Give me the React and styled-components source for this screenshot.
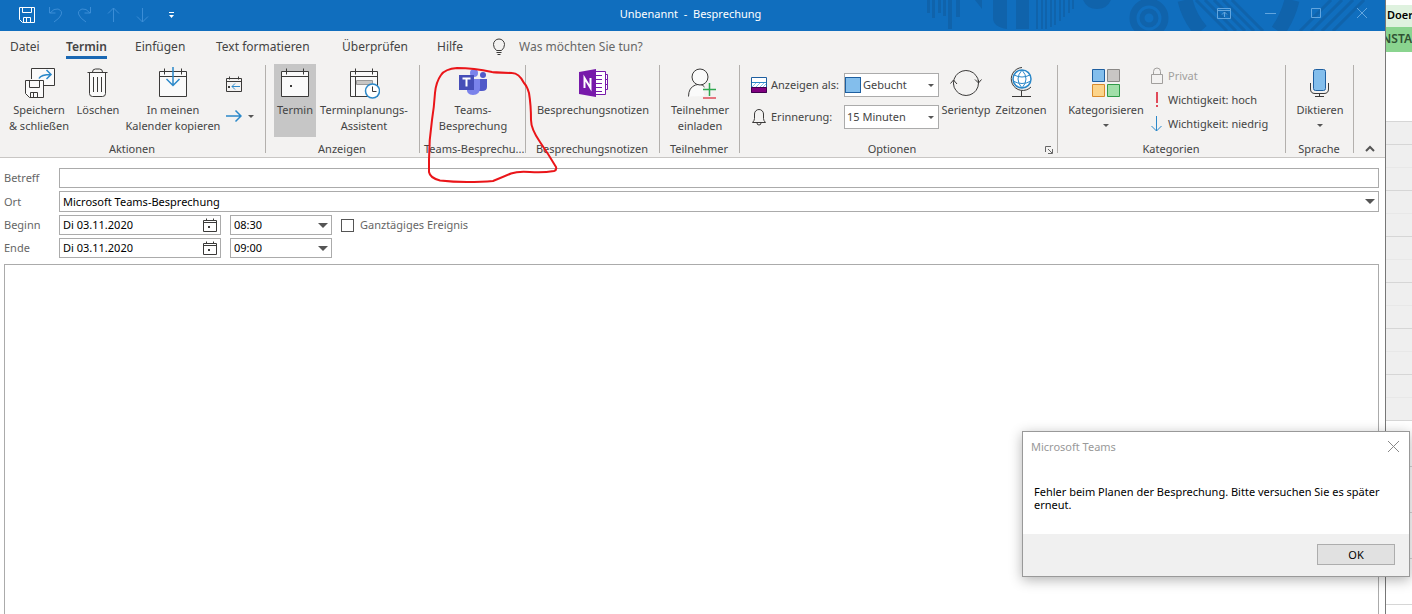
import React from "react";
import styled, { createGlobalStyle, css } from "styled-components";

const ink = "#444444";
const dark = "#3b3a39";
const blue = "#2b88c9";

const GlobalStyle = createGlobalStyle`
  *, *::before, *::after { box-sizing: border-box; }
  body {
    margin: 0;
    background: #fff;
    color: ${ink};
    font: 11px/16px "Noto Sans", "Segoe UI", sans-serif;
  }
  button, input, select, textarea { font: inherit; color: inherit; margin: 0; }
`;

const Desktop = styled.div`
  position: relative;
  display: grid;
  grid-template-columns: minmax(0, 1fr) 26px;
  height: 100vh;
  overflow: hidden;
`;

const MeetingWindow = styled.main`
  display: flex;
  flex-direction: column;
  min-width: 0;
  border-right: 1px solid #777;
  background: #fff;
`;

/* Title bar */
const TitleBar = styled.header`
  position: relative;
  display: grid;
  grid-template-columns: 1fr auto 1fr;
  align-items: center;
  height: 31px;
  flex: none;
  background: #106ebe;
  color: #fff;
`;

const Doodles = styled.svg`
  position: absolute;
  top: 0;
  right: 0;
  width: 465px;
  height: 31px;
`;

const QuickAccess = styled.div`
  display: flex;
  align-items: center;
  gap: 12px;
  padding: 0 18px 2px;
`;

const WindowControls = styled.div`
  position: relative;
  display: flex;
  justify-content: flex-end;
  align-items: center;
  gap: 30px;
  padding: 0 15px 5px 0;
`;

const PlainButton = styled.button`
  display: flex;
  align-items: center;
  padding: 0;
  border: 0;
  background: none;
`;

const TitleButton = styled(PlainButton)`
  color: ${(p) => (p.$dim ? "#3b8dd6" : "#fff")};
`;

const ControlButton = styled(PlainButton)`
  color: #62a5de;
`;

const WindowTitle = styled.h1`
  margin: 0;
  padding: 0 4px 4px 0;
  font-size: 11px;
  font-weight: 400;
  white-space: pre;
`;

/* Ribbon */
const Tabs = styled.nav`
  display: grid;
  grid-template-columns: 56px 69px 81px 126px 95px 62px 1fr;
  align-items: start;
  justify-items: start;
  flex: none;
  height: 31px;
  padding: 6px 10px 0;
  background: #f3f2f1;
  font-size: 12px;
  line-height: 19px;
`;

const Tab = styled.a`
  color: ${ink};
  text-decoration: none;
  white-space: nowrap;
  border-bottom: 3px solid transparent;
  ${(p) =>
    p.$active &&
    css`
      font-weight: 600;
      border-color: #1a68b3;
    `}
`;

const TellMe = styled.label`
  display: flex;
  align-items: center;
  gap: 12px;
  margin-left: -8px;
  padding-left: 0;
`;

const TellMeInput = styled.input`
  width: 160px;
  padding: 0;
  border: 0;
  background: none;
  outline: 0;
  &::placeholder { color: #666; opacity: 1; }
`;

const Ribbon = styled.div`
  display: grid;
  grid-template-columns: 266px 154px 106px 134px 80px 318px 228px 68px 1fr;
  flex: none;
  border-bottom: 1px solid #c8c6c4;
  background: #f3f2f1;
`;

const Group = styled.section`
  position: relative;
  display: flex;
  flex-direction: column;
  min-width: 0;
  padding-top: 2px;
  background: linear-gradient(#b3b0ad, #b3b0ad) right 3px / 1px 88px no-repeat;
`;

const GroupBody = styled.div`
  display: flex;
  justify-content: ${(p) => (p.$start ? "flex-start" : "center")};
  height: 73px;
  padding-left: ${(p) => p.$pad || 0}px;
`;

const GroupFooter = styled.div`
  display: flex;
  align-items: center;
  height: 20px;
  padding: 4px 4px 0;
`;

const GroupTitle = styled.h2`
  flex: 1;
  min-width: 0;
  margin: 0;
  padding-right: 2px;
  font-size: 11px;
  font-weight: 400;
  text-align: center;
  white-space: nowrap;
`;

const BigButton = styled.button`
  display: flex;
  flex-direction: column;
  align-items: center;
  flex: none;
  width: ${(p) => p.$width}px;
  padding: 3px 0 0;
  border: 0;
  background: ${(p) => (p.$pressed ? "#c6c6c6" : "none")};
  line-height: 16px;
  white-space: pre;
  & > svg { flex: none; margin-bottom: 3px; }
`;

const CaretLine = styled.span`
  display: flex;
  align-items: center;
  height: 14px;
`;

const SmallStack = styled.div`
  display: flex;
  flex-direction: column;
  gap: 16px;
  padding: 12px 0 0 1px;
`;

const SmallButton = styled(PlainButton)`
  gap: 6px;
  height: 16px;
`;

const OptionFields = styled.div`
  display: grid;
  grid-template-columns: 16px 69px 95px;
  grid-template-rows: 24px 24px;
  column-gap: 4px;
  row-gap: 8px;
  align-content: start;
  align-items: center;
  padding-top: 9px;
  margin-right: 2px;
`;

const FieldLabel = styled.label`
  white-space: nowrap;
`;

const Picker = styled.div`
  display: flex;
  align-items: center;
  gap: 2px;
  height: 24px;
  padding: 0 4px 0 ${(p) => (p.$swatch ? 0 : 2)}px;
  border: 1px solid #ababab;
  background: #fff;
`;

const Swatch = styled.span`
  width: 16px;
  height: 16px;
  border: 1px solid #1e5fa0;
  background: #83beec;
`;

const BareSelect = styled.select`
  appearance: none;
  flex: 1;
  min-width: 0;
  padding: 0;
  border: 0;
  background: none;
  outline: 0;
`;

const ItemList = styled.div`
  display: flex;
  flex-direction: column;
`;

const ListButton = styled(PlainButton)`
  gap: 4px;
  height: 24px;
  white-space: nowrap;
  color: ${(p) => (p.disabled ? "#a19f9d" : ink)};
`;

const Collapse = styled.div`
  display: flex;
  align-items: flex-end;
  padding: 0 0 4px 11px;
`;

const RedMark = styled.svg`
  position: absolute;
  top: 0;
  left: 0;
  z-index: 2;
  width: 144px;
  height: 128px;
  pointer-events: none;
`;

/* Form */
const Form = styled.form`
  display: flex;
  flex-direction: column;
  flex: 1;
  min-height: 0;
  padding: 10px 6px 0 4px;
  color: #000;
`;

const Row = styled.div`
  display: flex;
  align-items: center;
  margin-bottom: 3px;
`;

const RowLabel = styled.label`
  flex: none;
  width: 55px;
  color: #666;
`;

const Box = styled.div`
  display: flex;
  align-items: center;
  flex: ${(p) => (p.$width ? "none" : "1")};
  width: ${(p) => (p.$width ? p.$width + "px" : "auto")};
  height: ${(p) => (p.$tall ? 21 : 20)}px;
  margin-right: ${(p) => (p.$width ? 9 : 0)}px;
  padding: 0 3px;
  border: 1px solid #ababab;
  background: #fff;
`;

const BareInput = styled.input`
  flex: 1;
  min-width: 0;
  height: 16px;
  padding: 0;
  border: 0;
  background: none;
  outline: 0;
`;

const Check = styled.input`
  appearance: none;
  width: 13px;
  height: 13px;
  border: 1px solid #555;
  background: #fff;
`;

const CheckLabel = styled.label`
  display: flex;
  align-items: center;
  gap: 6px;
  color: #666;
`;

const Message = styled.textarea`
  flex: 1;
  margin-top: 3px;
  padding: 8px;
  border: 1px solid #ababab;
  border-bottom: 0;
  outline: 0;
  resize: none;
`;

/* Calendar strip of the window behind */
const Strip = styled.aside`
  display: flex;
  flex-direction: column;
  overflow: hidden;
  padding-top: 5px;
  background: #fff;
`;

const StripCell = styled.div`
  display: flex;
  flex: none;
  justify-content: ${(p) => (p.$end ? "flex-end" : "flex-start")};
  height: ${(p) => p.$height}px;
  padding-left: 1px;
  overflow: hidden;
  background: ${(p) => p.$fill};
  color: ${(p) => p.$color};
  font-size: ${(p) => p.$size}px;
  font-weight: 600;
  line-height: ${(p) => p.$height - 2}px;
`;

const Slots = styled.div`
  flex: none;
  margin-top: 69px;
  border-top: 1px solid #d6d6d6;
`;

const Slot = styled.div`
  height: ${(p) => (p.$half ? 23 : 46)}px;
  border-bottom: 1px solid #d6d6d6;
  background: ${(p) =>
    p.$free ? "#fff" : p.$half ? "#efefef" : "linear-gradient(#e8e8e8, #e8e8e8) 0 22px / 100% 1px no-repeat #efefef"};
`;

/* Error dialog */
const Dialog = styled.div`
  position: absolute;
  right: 2px;
  bottom: 37px;
  z-index: 3;
  width: 388px;
  border: 1px solid #999;
  background: #fff;
  color: #000;
  box-shadow: 0 3px 12px rgba(0, 0, 0, 0.3);
`;

const DialogHead = styled.div`
  display: flex;
  justify-content: space-between;
  align-items: center;
  height: 30px;
  padding: 0 10px 1px 8px;
  color: #999;
`;

const DialogText = styled.p`
  height: 72px;
  margin: 0;
  padding: 23px 11px 0;
  line-height: 13px;
`;

const DialogFooter = styled.div`
  display: flex;
  justify-content: flex-end;
  height: 42px;
  padding: 10px 14px 0;
  background: #f0f0f0;
`;

const OkButton = styled.button`
  width: 78px;
  height: 21px;
  padding: 0;
  border: 1px solid #adadad;
  background: #e1e1e1;
`;

const Icon = ({ w = 16, h = w, children, sw = 1, color = dark }) => (
  <svg width={w} height={h} viewBox={`0 0 ${w} ${h}`} fill="none" stroke={color} strokeWidth={sw} aria-hidden="true">
    {children}
  </svg>
);

const Caret = ({ w = 6, color = "#555" }) => (
  <svg width={w} height={Math.ceil(w / 2)} viewBox="0 0 10 5" preserveAspectRatio="none" fill={color} aria-hidden="true">
    <path d="M0 0h10L5 5z" />
  </svg>
);

const DateIcon = () => (
  <Icon w={14}>
    <path d="M.5 2.5h13v11H.5zM.5 4.500h13M3.5 .5v2M10.5 .5v2" />
    <path d="M5 8h2v2H5z" fill={dark} stroke="none" />
  </Icon>
);

const TitleDoodles = () => (
  <Doodles viewBox="0 0 465 31" fill="#1063ab" aria-hidden="true">
    <path d="M7 0h3v13H7zM12 0h3v18h-3zM18 0h3v13h-3zM23 0h3v16h-3zM28 0h4v29h-4zM36 0h4v17h-4zM55 0h7v9zM73 0h14v29q-14-2-14-11zM96 0h13v29H96z" />
    <path d="M116 0h2v29h-2zM121 0h2v29h-2zM125 0h2v29h-2zM130 0h2v27h-2zM134 0h2v25h-2zM139 0h2v21h-2zM143 0h2v17h-2zM148 0h2v13h-2zM152 0h2v9h-2z" />
    <path d="M163 0h28q-4 9-14 9t-14-9z" />
    <g fill="none" stroke="#1063ab">
      <circle cx="229" cy="18" r="16" strokeWidth="7" />
      <circle cx="229" cy="18" r="7" strokeWidth="5" />
      <path d="M265 0q4 17 16 31M372 0q-4 17-14 31" strokeWidth="15" />
      <path d="M276 0l31 31M285 0l31 31M294 0l31 31M303 0l31 31M312 0l31 31M380 31l31-31M391 31l31-31M402 31l31-31M413 31l31-31" strokeWidth="3" />
    </g>
  </Doodles>
);

const CalendarBase = () => (
  <>
    <path d="M2.5 4.5h27v25h-27z" fill="#fafafa" />
    <path d="M2.5 9.5h27M7.5 1.5v6M24.5 1.5v6" />
  </>
);

const BigAction = ({ icon, text, width, pressed, caret }) => (
  <BigButton type="button" $width={width} $pressed={pressed}>
    {icon}
    <span>{text}</span>
    {caret && (
      <CaretLine>
        <Caret />
      </CaretLine>
    )}
  </BigButton>
);

const RibbonGroup = ({ title, start, pad, launcher, overlay, children }) => (
  <Group>
    <GroupBody $start={start} $pad={pad}>
      {children}
    </GroupBody>
    <GroupFooter>
      <GroupTitle>{title}</GroupTitle>
      {launcher}
    </GroupFooter>
    {overlay}
  </Group>
);

const icons = {
  saveClose: (
    <Icon w={32}>
      <path d="M8.500 12V1.500h23v17H21" fill="#fafafa" />
      <path d="M2.500 13.500h18v17h-14l-4-4z" fill="#fafafa" />
      <path d="M6.500 13.500v7h10v-7M7.500 30.500v-5h7v5M10.500 26v4" />
      <path d="M16 11.500q2-4 12-4M23.500 3l4.500 4.500-4.500 4.500" stroke={blue} strokeWidth="1.500" />
    </Icon>
  ),
  trash: (
    <Icon w={32}>
      <path d="M7.500 5.500v21q0 3 3 3h10q3 0 3-3v-21" fill="#fafafa" />
      <path d="M5.500 5.500h20M10.500 5q0-3 3-3h4q3 0 3 3M11.500 10v15M15.500 10v15M19.500 10v15" />
    </Icon>
  ),
  copyCal: (
    <Icon w={32}>
      <CalendarBase />
      <path d="M16 0v18M9.500 12l6.500 6.500 6.500-6.500" stroke={blue} strokeWidth="1.500" />
    </Icon>
  ),
  termin: (
    <Icon w={32}>
      <CalendarBase />
      <path d="M11 18h2v2h-2z" fill={dark} stroke="none" />
    </Icon>
  ),
  planner: (
    <Icon w={32}>
      <CalendarBase />
      <path d="M8.500 13.500h16v4h-16z" fill="#c8c6c4" stroke="#999" />
      <path d="M7.500 10v19" />
      <circle cx="24.500" cy="24" r="7" fill="#fff" stroke={blue} strokeWidth="1.500" />
      <path d="M24.500 19.500v5h4" />
    </Icon>
  ),
  teams: (
    <Icon w={32}>
      <g stroke="none">
        <circle cx="26" cy="8" r="3" fill="#5059c9" />
        <path d="M20 12h10v8q0 4-5 4h-5z" fill="#5059c9" />
        <circle cx="17" cy="6" r="4" fill="#7b83eb" />
        <path d="M10 12h13v9q0 7-7 7t-6-7z" fill="#7b83eb" />
        <path d="M2 8h15v15H2z" fill="#464eb8" />
      </g>
      <path d="M5.500 11.500h8M9.500 11.500v8" stroke="#fff" strokeWidth="2" />
    </Icon>
  ),
  onenote: (
    <Icon w={32}>
      <path d="M18 4.500h10.500v23H18M28.500 7.500h2v5h-2M28.500 12.500h2v5h-2M28.500 17.500h2v5h-2" stroke="#7719aa" fill="#fff" />
      <path d="M18 8.500h7M18 12.500h7M18 16.500h7M18 20.500h7M18 24.500h7" stroke="#7719aa" />
      <path d="M2 5l17-3v28L2 27z" fill="#7719aa" stroke="none" />
      <path d="M7.500 21V11l6 10V11" stroke="#fff" strokeWidth="2" />
    </Icon>
  ),
  invite: (
    <Icon w={32}>
      <path d="M4.500 29.500q0-9 7-11.500h7l2 11" fill="#fafafa" stroke="none" />
      <path d="M4.500 29.500q0-9 7-11.500 6-2 9 2" />
      <circle cx="16" cy="10" r="8" fill="#fafafa" />
      <path d="M25.500 16v13M19 22.500h13" stroke="#2ea84f" strokeWidth="1.500" />
      <path d="M19 31h13" stroke="#e04a59" strokeWidth="1.500" />
    </Icon>
  ),
  recur: (
    <Icon w={32}>
      <path d="M3.500 17.500V16A12.500 12.500 0 0 1 26 8.500M28.500 13v3A12.500 12.500 0 0 1 6 23.500" />
      <path d="M26 8.500q2.500 3 2.500 7M6 23.500q-2.500-3-2.500-7" />
      <path d="M.5 16.500l3-3.500 3.500 4M25 12.500l3.500 3.500 3-3.500" />
    </Icon>
  ),
  globe: (
    <Icon w={32}>
      <g stroke={blue}>
        <circle cx="17" cy="12" r="9" fill="#fff" strokeWidth="1.500" />
        <path d="M17 3q-8 9 0 18M17 3q8 9 0 18M9 8q8 4 16 0M8 14q9 5 18 0" />
      </g>
      <path d="M17 .5A11.500 11.500 0 1 0 26 20M16.500 24v5M7 29.500h19" />
    </Icon>
  ),
  categories: (
    <Icon w={32}>
      <path d="M2.500 2.500h12v12h-12z" fill="#83beec" stroke="#1e5fa0" />
      <path d="M17.500 2.500h12v12h-12z" fill="#c8c6c4" stroke="#8a8886" />
      <path d="M2.500 17.500h12v12h-12z" fill="#fcd48a" stroke="#d98a2b" />
      <path d="M17.500 17.500h12v12h-12z" fill="#a1dfa9" stroke="#2f9a48" />
    </Icon>
  ),
  mic: (
    <Icon w={32}>
      <rect x="9.500" y="2.500" width="12" height="21" rx="2" fill="#83beec" stroke="#1e5fa0" />
      <path d="M6.500 16v6q0 4.500 4.500 4.500h9q4.500 0 4.500-4.500v-6M15.500 26.500v3M11 29.500h9" />
    </Icon>
  ),
};

export default function App() {
  return (
    <Desktop>
      <GlobalStyle />
      <MeetingWindow>
        <TitleBar>
          <TitleDoodles />
          <QuickAccess>
            <TitleButton aria-label="Speichern">
              <Icon w={17} color="#fff">
                <path d="M1.500 1.500h15v15h-12l-3-3zM4.500 1.500v5h9v-5M5.500 16.500v-5h7v5M8.500 12v4" />
              </Icon>
            </TitleButton>
            <TitleButton $dim aria-label="Rückgängig">
              <Icon w={17} color="currentColor">
                <path d="M2.500 1v6h6M3 7q4-5 8-4 5 2 3 6-1 3-7 7" />
              </Icon>
            </TitleButton>
            <TitleButton $dim aria-label="Wiederholen">
              <Icon w={17} color="currentColor">
                <path d="M14.500 1v6h-6M14 7Q10 2 6 3 1 5 3 9q1 3 7 7" />
              </Icon>
            </TitleButton>
            <TitleButton $dim aria-label="Vorheriges Element">
              <Icon w={17} color="currentColor">
                <path d="M8.500 16V2M3 7.500L8.500 2 14 7.500" />
              </Icon>
            </TitleButton>
            <TitleButton $dim aria-label="Nächstes Element">
              <Icon w={17} color="currentColor">
                <path d="M8.500 2v14M3 10.500L8.500 16l5.500-5.500" />
              </Icon>
            </TitleButton>
            <TitleButton aria-label="Symbolleiste anpassen">
              <Icon w={17} color="#fff">
                <path d="M6 6.500h5" />
                <path d="M6 9h5l-2.500 3z" fill="#fff" stroke="none" />
              </Icon>
            </TitleButton>
          </QuickAccess>
          <WindowTitle>{"Unbenannt  -  Besprechung"}</WindowTitle>
          <WindowControls>
            <ControlButton aria-label="Menüband-Anzeigeoptionen">
              <Icon w={16} color="currentColor">
                <path d="M1.500 3.500h13v10h-13zM1.500 5.500h13M8.500 12V7M6 9.500L8.500 7 11 9.500" />
              </Icon>
            </ControlButton>
            <ControlButton aria-label="Minimieren">
              <Icon w={16} color="currentColor">
                <path d="M3 8.500h11" />
              </Icon>
            </ControlButton>
            <ControlButton aria-label="Maximieren">
              <Icon w={16} color="currentColor">
                <path d="M3.500 3.500h9v9h-9z" />
              </Icon>
            </ControlButton>
            <ControlButton aria-label="Schließen">
              <Icon w={16} color="currentColor">
                <path d="M3 3l10 10M13 3L3 13" />
              </Icon>
            </ControlButton>
          </WindowControls>
        </TitleBar>

        <Tabs>
          <Tab href="#datei">Datei</Tab>
          <Tab href="#termin" $active>Termin</Tab>
          <Tab href="#einfuegen">Einfügen</Tab>
          <Tab href="#text">Text formatieren</Tab>
          <Tab href="#pruefen">Überprüfen</Tab>
          <Tab href="#hilfe">Hilfe</Tab>
          <TellMe>
            <Icon w={16} h={18}>
              <path d="M5.500 12.500Q2.500 10 2.500 6.500a5.500 5.500 0 0 1 11 0q0 3.500-3 6zM5.500 14.500h5M6.500 16.500h3" />
            </Icon>
            <TellMeInput placeholder="Was möchten Sie tun?" aria-label="Was möchten Sie tun?" />
          </TellMe>
        </Tabs>

        <Ribbon>
          <RibbonGroup title="Aktionen" start pad={3}>
            <BigAction width={72} icon={icons.saveClose} text={"Speichern\n& schließen"} />
            <BigAction width={46} icon={icons.trash} text="Löschen" />
            <BigAction width={104} icon={icons.copyCal} text={"In meinen\nKalender kopieren"} />
            <SmallStack>
              <SmallButton type="button" aria-label="Kalender">
                <Icon w={17}>
                  <path d="M.5 2.500h15v13H.5zM.5 5.500h15M3.500 .5v3M12.500 .5v3" />
                  <path d="M14 10.500H6M9 7.500l-3 3 3 3" stroke={blue} />
                  <path d="M2 10h2v2H2z" fill={dark} stroke="none" />
                </Icon>
              </SmallButton>
              <SmallButton type="button" aria-label="Weiterleiten">
                <Icon w={16}>
                  <path d="M0 8h15M9.500 2.500L15 8l-5.500 5.500" stroke={blue} strokeWidth="1.500" />
                </Icon>
                <Caret />
              </SmallButton>
            </SmallStack>
          </RibbonGroup>

          <RibbonGroup title="Anzeigen" start pad={8}>
            <BigAction width={42} pressed icon={icons.termin} text="Termin" />
            <BigAction width={96} icon={icons.planner} text={"Terminplanungs-\nAssistent"} />
          </RibbonGroup>

          <RibbonGroup
            title="Teams-Besprechu..."
            overlay={
              <RedMark viewBox="420 62 144 128" fill="none" stroke="#ea1519" strokeWidth="2" strokeLinecap="round" strokeLinejoin="round">
                <path d="M512 73L492 72Q474 68 457 68Q445 69 441 75Q436 82 435 93Q434 108 432 120Q429 140 429 160V172Q430 178 440 180.500Q453 182 467 182Q482 182 493 181Q503 177 511 173.500Q518 171 530 172Q543 173 554 171Q557 170 556 167Q549 155 540 142Q531 129 531 120Q531 105 529 93Q527 86 524 83Q519 73 512 73L493 72.500" />
              </RedMark>
            }
          >
            <BigAction width={90} icon={icons.teams} text={"Teams-\nBesprechung"} />
          </RibbonGroup>

          <RibbonGroup title="Besprechungsnotizen">
            <BigAction width={120} icon={icons.onenote} text="Besprechungsnotizen" />
          </RibbonGroup>

          <RibbonGroup title="Teilnehmer">
            <BigAction width={70} icon={icons.invite} text={"Teilnehmer\neinladen"} />
          </RibbonGroup>

          <RibbonGroup
            title="Optionen"
            start
            pad={11}
            launcher={
              <PlainButton type="button" aria-label="Weitere Optionen">
                <Icon w={12} color="#666">
                  <path d="M3.500 9V3.500H9M6 6l4 4M10.500 6v4.500H6" />
                </Icon>
              </PlainButton>
            }
          >
            <OptionFields>
              <Icon w={16}>
                <path d="M.5 .5h15v15H.5z" fill="#fff" stroke="#1e5fa0" />
                <path d="M1 10l4-4M5 10l4-4M9 10l4-4M12 10l3-3" stroke="#83beec" />
                <path d="M1 5.500h14" stroke={blue} />
                <path d="M.5 10.500h15v5H.5z" fill="#80007f" stroke="#40004f" />
              </Icon>
              <FieldLabel htmlFor="show-as">Anzeigen als:</FieldLabel>
              <Picker $swatch>
                <Swatch />
                <BareSelect id="show-as">
                  <option>Gebucht</option>
                </BareSelect>
                <Caret />
              </Picker>
              <Icon w={16} h={18}>
                <path d="M1.500 14.500q2-2 2-4V6a4.500 4.500 0 0 1 9 0v4.500q0 2 2 4zM6 15q0 2 2 2t2-2" />
              </Icon>
              <FieldLabel htmlFor="reminder">Erinnerung:</FieldLabel>
              <Picker>
                <BareSelect id="reminder">
                  <option>15 Minuten</option>
                </BareSelect>
                <Caret />
              </Picker>
            </OptionFields>
            <BigAction width={50} icon={icons.recur} text="Serientyp" />
            <BigAction width={60} icon={icons.globe} text="Zeitzonen" />
          </RibbonGroup>

          <RibbonGroup title="Kategorien" start pad={10}>
            <BigAction width={76} icon={icons.categories} text="Kategorisieren" caret />
            <ItemList>
              <ListButton type="button" disabled>
                <Icon w={20} h={18} color="#a19f9d">
                  <path d="M7.500 7.500h11v9h-11zM9.500 7.500V4.500a3.500 3.500 0 0 1 7 0v3" />
                </Icon>
                Privat
              </ListButton>
              <ListButton type="button">
                <Icon w={20} h={18} color="#e04a59" sw={2}>
                  <path d="M13 1v11M13 14v2" />
                </Icon>
                Wichtigkeit: hoch
              </ListButton>
              <ListButton type="button">
                <Icon w={20} h={18} color={blue}>
                  <path d="M12.500 1v15M7.500 11l5 5 5-5" />
                </Icon>
                Wichtigkeit: niedrig
              </ListButton>
            </ItemList>
          </RibbonGroup>

          <RibbonGroup title="Sprache">
            <BigAction width={60} icon={icons.mic} text="Diktieren" caret />
          </RibbonGroup>

          <Collapse>
            <PlainButton type="button" aria-label="Menüband reduzieren">
              <Icon w={10} h={8} color="#555" sw={2}>
                <path d="M1 6l4-4 4 4" />
              </Icon>
            </PlainButton>
          </Collapse>
        </Ribbon>

        <Form>
          <Row>
            <RowLabel htmlFor="subject">Betreff</RowLabel>
            <Box>
              <BareInput id="subject" />
            </Box>
          </Row>
          <Row>
            <RowLabel htmlFor="location">Ort</RowLabel>
            <Box $tall>
              <BareInput id="location" defaultValue="Microsoft Teams-Besprechung" />
              <Caret w={10} />
            </Box>
          </Row>
          {[
            ["Beginn", "start", "08:30"],
            ["Ende", "end", "09:00"],
          ].map(([label, id, time]) => (
            <Row key={id}>
              <RowLabel htmlFor={id}>{label}</RowLabel>
              <Box $width={162}>
                <BareInput id={id} defaultValue="Di 03.11.2020" />
                <DateIcon />
              </Box>
              <Box $width={102}>
                <BareSelect aria-label={`${label} Uhrzeit`}>
                  <option>{time}</option>
                </BareSelect>
                <Caret w={10} />
              </Box>
              {id === "start" && (
                <CheckLabel>
                  <Check type="checkbox" />
                  Ganztägiges Ereignis
                </CheckLabel>
              )}
            </Row>
          ))}
          <Message aria-label="Nachricht" />
        </Form>
      </MeetingWindow>

      <Strip>
        <StripCell $height={22} $fill="#dff2df" $color="#000" $size={11}>Doer</StripCell>
        <StripCell $height={25} $fill="#8ad48f" $color="#2f5233" $size={12} $end>NSTA</StripCell>
        <Slots>
          <Slot $half />
          {[0, 1, 2, 3, 4, 5].map((n) => (
            <Slot key={n} />
          ))}
          {[0, 1, 2, 3, 4].map((n) => (
            <Slot key={n} $free />
          ))}
        </Slots>
      </Strip>

      <Dialog role="alertdialog" aria-labelledby="dialog-title" aria-describedby="dialog-text">
        <DialogHead>
          <span id="dialog-title">Microsoft Teams</span>
          <PlainButton type="button" aria-label="Schließen">
            <Icon w={11} color="#888">
              <path d="M0 0l11 11M11 0L0 11" />
            </Icon>
          </PlainButton>
        </DialogHead>
        <DialogText id="dialog-text">
          Fehler beim Planen der Besprechung. Bitte versuchen Sie es später erneut.
        </DialogText>
        <DialogFooter>
          <OkButton type="button">OK</OkButton>
        </DialogFooter>
      </Dialog>
    </Desktop>
  );
}
